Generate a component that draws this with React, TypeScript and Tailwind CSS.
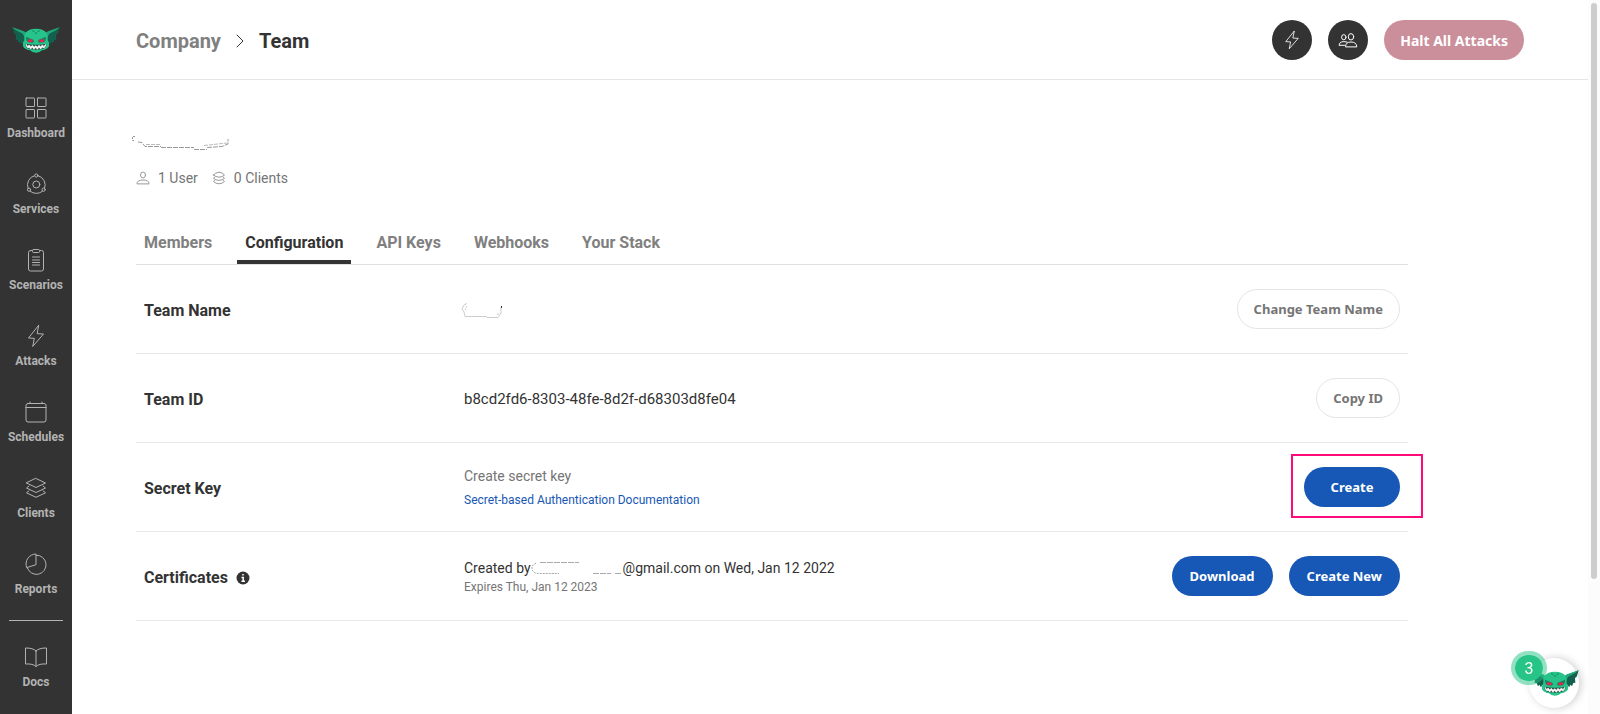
import type { ReactNode } from 'react';

type IconProps = { className?: string };

const strokeProps = {
  fill: 'none',
  stroke: 'currentColor',
  strokeLinejoin: 'round' as const,
  strokeLinecap: 'round' as const,
};

function GoblinLogo({ className }: IconProps) {
  return (
    <svg viewBox="0 0 144 78" className={className} aria-hidden="true">
      {/* ears */}
      <path d="M1 1 L36 14 L42 24 L38 50 L34 44 L30 52 L25 44 L21 49 L17 39 L11 38 L12 24 L7 20 Z" fill="#14604f" />
      <path d="M143 1 L108 14 L102 24 L106 50 L110 44 L114 52 L119 44 L123 49 L127 39 L133 38 L132 24 L137 20 Z" fill="#14604f" />
      <path d="M1 1 L36 13 L44 18 L40 34 L32 20 L10 8 Z" fill="#23a87a" />
      <path d="M143 1 L108 13 L100 18 L104 34 L112 20 L134 8 Z" fill="#23a87a" />
      {/* head */}
      <path
        d="M39 20 Q48 5 72 5 Q96 5 105 20 Q108 30 107 40 Q113 46 111 58 Q108 66 98 68 L90 70 Q84 77 72 77 Q60 77 54 70 L46 68 Q36 66 33 58 Q31 46 37 40 Q36 30 39 20 Z"
        fill="#26c48a"
      />
      <path d="M61 11 L67 14 M83 11 L77 14 M69 18 L75 18" stroke="#177a5b" strokeWidth="3" />
      {/* eyes */}
      <path d="M42 29 L64 38 L67 43 L62 47 L48 46 L43 40 Z" fill="#1b7f60" />
      <path d="M102 29 L80 38 L77 43 L82 47 L96 46 L101 40 Z" fill="#1b7f60" />
      <ellipse cx="55" cy="41" rx="8" ry="4.5" fill="#e5264f" />
      <ellipse cx="89" cy="41" rx="8" ry="4.5" fill="#e5264f" />
      {/* teeth */}
      <path d="M41 50 Q72 56 103 50 Q105 62 92 66 Q72 71 52 66 Q39 62 41 50 Z" fill="#2f5148" />
      <path
        d="M43 52 L47 60 L51 54 L56 60 L61 55 L66 61 L71 56 L76 61 L81 55 L86 60 L91 54 L96 59 L101 52 L100 58 L96 63 L91 60 L86 66 L81 60 L76 67 L71 61 L66 67 L61 60 L56 66 L51 60 L48 63 L44 58 Z"
        fill="#fff"
        stroke="#fff"
        strokeWidth="2"
      />
    </svg>
  );
}

function DashboardIcon({ className }: IconProps) {
  return (
    <svg viewBox="0 0 24 24" className={className} {...strokeProps}>
      <rect x="2" y="2" width="8.5" height="8.5" rx="0.5" />
      <rect x="13.5" y="2" width="8.5" height="8.5" rx="0.5" />
      <rect x="2" y="13.5" width="8.5" height="8.5" rx="0.5" />
      <rect x="13.5" y="13.5" width="8.5" height="8.5" rx="0.5" />
    </svg>
  );
}

function ServicesIcon({ className }: IconProps) {
  return (
    <svg viewBox="0 0 24 24" className={className} {...strokeProps}>
      <circle cx="12.3" cy="12.5" r="3.5" />
      <circle cx="12.3" cy="3.5" r="1.6" />
      <circle cx="5" cy="17.7" r="1.6" />
      <circle cx="19.6" cy="17.7" r="1.6" />
      <path d="M10.5 3.7 A9.3 9.3 0 0 0 4 16.2 M14.1 3.7 A9.3 9.3 0 0 1 20.6 16.2 M6.2 19.3 A9.6 9.6 0 0 0 18.4 19.3" />
    </svg>
  );
}

function ScenariosIcon({ className }: IconProps) {
  return (
    <svg viewBox="0 0 24 24" className={className} {...strokeProps}>
      <rect x="4.5" y="2.5" width="15" height="20.5" rx="2" />
      <rect x="8.5" y="1.5" width="7" height="3" rx="1" fill="#333" />
      <path d="M8.5 9h7M8.5 12h7M8.5 14.5h7M8.5 17h7" />
    </svg>
  );
}

function BoltIcon({ className }: IconProps) {
  return (
    <svg viewBox="0 0 24 24" className={className} {...strokeProps}>
      <path d="M14.5 1.5 L4.5 14 L10.3 14.3 L8.7 22.5 L19.5 10 L13.5 9.7 Z" />
    </svg>
  );
}

function CalendarIcon({ className }: IconProps) {
  return (
    <svg viewBox="0 0 24 24" className={className} {...strokeProps}>
      <rect x="2" y="3.5" width="20" height="18.5" rx="2" />
      <path d="M2 7.5h20M6 2v1.5M18 2v1.5" />
    </svg>
  );
}

function LayersIcon({ className }: IconProps) {
  return (
    <svg viewBox="0 0 24 24" className={className} {...strokeProps}>
      <path d="M12 2.5 L21.5 7 L12 11.5 L2.5 7 Z" />
      <path d="M5 10 L2.5 12 L12 16.5 L21.5 12 L19 10" />
      <path d="M5 14.8 L2.5 16.8 L12 21.3 L21.5 16.8 L19 14.8" />
    </svg>
  );
}

function ReportsIcon({ className }: IconProps) {
  return (
    <svg viewBox="0 0 24 24" className={className} {...strokeProps}>
      <path d="M12 12.3 V3.2 A9.6 9.6 0 1 1 3.3 15.8 Z" />
      <path d="M12 3.2 V2 A10 10 0 0 0 2.8 15.8 H3.3" />
    </svg>
  );
}

function DocsIcon({ className }: IconProps) {
  return (
    <svg viewBox="0 0 24 24" className={className} {...strokeProps}>
      <path d="M12 6 Q9 2.8 1.5 3 V19 Q9 18.5 12 21.5 Q15 18.5 22.5 19 V3 Q15 2.8 12 6 Z M12 6 V21.5" />
    </svg>
  );
}

function UserIcon({ className }: IconProps) {
  return (
    <svg viewBox="0 0 14 14" className={className} {...strokeProps}>
      <ellipse cx="7" cy="4" rx="2.5" ry="3" />
      <path d="M1 12.5 Q1 9 7 9 Q13 9 13 12.5 Z" />
    </svg>
  );
}

function StackIcon({ className }: IconProps) {
  return (
    <svg viewBox="0 0 14 14" className={className} {...strokeProps}>
      <path d="M1.5 4 Q3.5 1.5 7 1.2 Q10.5 1.5 12.5 4 Q10.5 6 7 6.2 Q3.5 6 1.5 4 Z" />
      <path d="M3 6 L1.5 7.2 Q3.5 9.2 7 9.4 Q10.5 9.2 12.5 7.2 L11 6" />
      <path d="M3 9.2 L1.5 10.4 Q3.5 12.6 7 12.8 Q10.5 12.6 12.5 10.4 L11 9.2" />
    </svg>
  );
}

function UsersIcon({ className }: IconProps) {
  return (
    <svg viewBox="0 0 20 16" className={className} {...strokeProps}>
      <ellipse cx="13" cy="4.8" rx="2.7" ry="3.2" />
      <path d="M7.5 14.5 Q7.5 10 13 10 Q18.5 10 18.8 14.5 Z" />
      <ellipse cx="5.8" cy="5.2" rx="2.2" ry="2.6" />
      <path d="M9 10 Q1.5 8.3 1 13.3 H6.5" />
    </svg>
  );
}

const navItems = [
  { label: 'Dashboard', icon: DashboardIcon },
  { label: 'Services', icon: ServicesIcon },
  { label: 'Scenarios', icon: ScenariosIcon },
  { label: 'Attacks', icon: BoltIcon },
  { label: 'Schedules', icon: CalendarIcon },
  { label: 'Clients', icon: LayersIcon },
  { label: 'Reports', icon: ReportsIcon },
];

const tabs = ['Members', 'Configuration', 'API Keys', 'Webhooks', 'Your Stack'];

function NavItem({ label, icon: Icon }: (typeof navItems)[number]) {
  return (
    <a href="#" className="flex flex-col items-center gap-1 text-[#b3b3b3]">
      <Icon className="size-6" />
      <span className="text-xs leading-[18px] font-bold">{label}</span>
    </a>
  );
}

function Sidebar() {
  return (
    <nav className="flex w-18 shrink-0 flex-col items-center bg-[#333] pt-[27px]">
      <a href="#" aria-label="Home" className="mb-[43px]">
        <GoblinLogo className="h-[26px] w-12" />
      </a>
      <div className="flex flex-col gap-[30px]">
        {navItems.map((item) => (
          <NavItem key={item.label} {...item} />
        ))}
      </div>
      <hr className="mt-[22px] mb-6 w-[54px] border-[#b3b3b3]" />
      <NavItem label="Docs" icon={DocsIcon} />
    </nav>
  );
}

function Button({ variant, children }: { variant: 'primary' | 'outline' | 'danger'; children: ReactNode }) {
  const styles = {
    primary: 'bg-[#1757b5] text-white text-[13px] px-[18px] min-w-24',
    outline: 'border border-[#e5e5e5] bg-white text-[#757575] text-[13px] px-4',
    danger: 'bg-[#cb8f9b] text-white text-sm px-4',
  };
  return (
    <button className={`h-10 rounded-full pt-0.5 font-['Noto_Sans',sans-serif] font-bold whitespace-nowrap ${styles[variant]}`}>
      {children}
    </button>
  );
}

function Header() {
  return (
    <header className="flex h-20 items-center justify-between border-b border-[#e5e5e5] px-16">
      <div className="flex items-center gap-[15px] pt-0.5 text-xl font-bold">
        <a href="#" className="text-[#808080]">Company</a>
        <svg viewBox="0 0 8 14" className="h-[14px] w-2" {...strokeProps}>
          <path d="M1 1 L7 7 L1 13" />
        </svg>
        <h1>Team</h1>
      </div>
      <div className="flex items-center gap-4">
        <button aria-label="Attacks" className="flex size-10 items-center justify-center rounded-full bg-[#333] text-white">
          <BoltIcon className="size-5" />
        </button>
        <button aria-label="Users" className="flex size-10 items-center justify-center rounded-full bg-[#333] text-white">
          <UsersIcon className="h-4 w-5" />
        </button>
        <Button variant="danger">Halt All Attacks</Button>
      </div>
    </header>
  );
}

function Row({ title, action, children }: { title: ReactNode; action: ReactNode; children: ReactNode }) {
  return (
    <div className="flex h-[89px] items-center border-b border-[#e8e8e8] px-2">
      <h2 className="flex w-80 shrink-0 items-center gap-2 pt-1 text-base font-bold">{title}</h2>
      <div className="flex-1 pt-0.5 text-sm leading-5">{children}</div>
      <div className="flex items-center gap-4">{action}</div>
    </div>
  );
}

function ChatWidget() {
  return (
    <button aria-label="Open messages" className="fixed right-[21px] bottom-1.5 size-[50px] rounded-full bg-white shadow-[2px_0_8px_rgba(0,0,0,0.2)]">
      <GoblinLogo className="absolute top-3 left-0.5 h-[26px] w-12" />
      <span className="absolute -top-[7px] -left-[18px] flex h-[34px] w-9 items-center justify-center rounded-full border-4 border-[#26c486]/50 bg-[#26c486] bg-clip-padding pt-0.5 text-base text-white">
        3
      </span>
    </button>
  );
}

export default function App() {
  return (
    <div className="flex min-h-screen bg-white font-[Roboto,sans-serif] text-[#333]">
      <Sidebar />
      <div className="min-w-0 flex-1">
        <Header />
        <main className="px-16 pt-[54px]">
          <svg viewBox="0 0 100 18" className="-ml-1.5 h-[18px] w-[100px]" fill="none" stroke="#999" strokeWidth="1">
            <path d="M5 2.5 H2.5 V6.5 H5" strokeDasharray="2 1" />
            <path d="M8 8 L12 8.5 L15 12.5 H31 M31 13.5 H64 M64 15.5 H77 M77 13.5 L92 12.5 L98 10 V5" strokeDasharray="5 1" />
            <path d="M16 10.5 H30 M74 11.5 L97 9" stroke="#bbb" strokeDasharray="4 1" />
          </svg>
          <div className="mt-4 flex items-center text-sm leading-5 text-[#757575]">
            <UserIcon className="mr-2 size-[14px] text-[#999]" />
            1 User
            <StackIcon className="mr-2 ml-[14px] size-[14px] text-[#999]" />
            0 Clients
          </div>

          <div className="max-w-[1272px]">
            <div role="tablist" className="mt-8 flex gap-[17px] border-b border-[#e0e0e0]">
              {tabs.map((tab) => (
                <button
                  key={tab}
                  role="tab"
                  aria-selected={tab === 'Configuration'}
                  className={
                    tab === 'Configuration'
                      ? 'h-11 border-b-4 border-[#333] px-2 pt-1.5 text-base font-bold'
                      : 'h-11 border-b-4 border-transparent px-2 pt-1.5 text-base font-bold text-[#808080]'
                  }
                >
                  {tab}
                </button>
              ))}
            </div>

            <Row title="Team Name" action={<Button variant="outline">Change Team Name</Button>}>
              <svg viewBox="0 0 44 18" className="-ml-1 h-[18px] w-11" fill="none" stroke="#ccc" strokeWidth="1">
                <path d="M7 2.5 L4 4 L2 8 L4 11 L5 15.5 H27 M27 16.5 H38 L41 12 V6" />
                <path d="M7 5 L5 8 L7 10 M37 13 H39" strokeDasharray="2 1" />
                <path d="M41.5 5 V7" stroke="#333" />
              </svg>
            </Row>
            <Row title="Team ID" action={<Button variant="outline">Copy ID</Button>}>
              <span className="text-[15px]">b8cd2fd6-8303-48fe-8d2f-d68303d8fe04</span>
            </Row>
            <Row
              title="Secret Key"
              action={
                <div className="relative">
                  <Button variant="primary">Create</Button>
                  <div className="pointer-events-none absolute -top-[13px] -right-[23px] -bottom-[11px] -left-[13px] border-2 border-[#ff0a78]" />
                </div>
              }
            >
              <p className="text-[#757575]">Create secret key</p>
              <a href="#" className="mt-1 block text-xs leading-5 text-[#1757b5]">
                Secret-based Authentication Documentation
              </a>
            </Row>
            <Row
              title={
                <>
                  Certificates
                  <svg viewBox="0 0 14 14" className="size-[14px]" aria-label="Info">
                    <circle cx="7" cy="7" r="6.5" fill="#333" />
                    <path d="M7 3 V4.6 M5.5 6.5 H7.2 V10 M5.5 10.2 H9" stroke="#fff" strokeWidth="1.5" fill="none" />
                  </svg>
                </>
              }
              action={
                <>
                  <Button variant="primary">Download</Button>
                  <Button variant="primary">Create New</Button>
                </>
              }
            >
              <p className="flex items-center">
                Created by
                <svg viewBox="0 0 92 16" className="h-4 w-[92px]" fill="none" stroke="#aaa" strokeWidth="1">
                  <path d="M5 3 L1 6 V10 L4 13 L8 13.5 H28" strokeDasharray="2 1" />
                  <path d="M9 2.5 H48 M62 13.5 H80 M84 13.5 H91" strokeDasharray="6 1" />
                </svg>
                @gmail.com on Wed, Jan 12 2022
              </p>
              <p className="text-xs leading-[18px] text-[#757575]">Expires Thu, Jan 12 2023</p>
            </Row>
          </div>
        </main>
      </div>
      {/* page scroll track */}
      <div className="w-3 shrink-0 bg-[#fcfcfc] px-[3px] pt-[3px]">
        <div className="h-[576px] rounded-full bg-[#cdcdcd]" />
      </div>
      <ChatWidget />
    </div>
  );
}
